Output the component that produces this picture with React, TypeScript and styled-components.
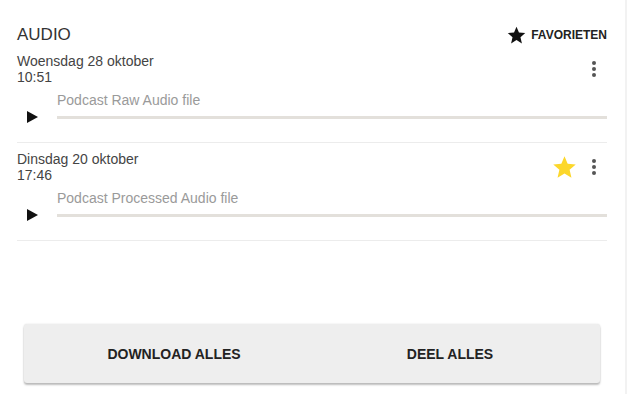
import React from 'react';
import styled, { createGlobalStyle } from 'styled-components';

const GlobalStyle = createGlobalStyle`
body {
  margin: 0;
  background: #ffffff;
  font-family: "Liberation Sans", Arial, sans-serif;
  color: #333333;
}
`;

type Recording = {
    date: string;
    time: string;
    title: string;
    favorite: boolean;
};

const recordings: Recording[] = [
    { date: 'Woensdag 28 oktober', time: '10:51', title: 'Podcast Raw Audio file', favorite: false },
    { date: 'Dinsdag 20 oktober', time: '17:46', title: 'Podcast Processed Audio file', favorite: true },
];

const StarIcon: React.FC<{ color: string; size: number }> = ({ color, size }) => (
    <svg width={size} height={size} viewBox="0 0 24 24">
        <path fill={color} d="M12 17.27L18.18 21l-1.64-7.03L22 9.24l-7.19-.61L12 2 9.19 8.63 2 9.24l5.46 4.73L5.82 21z" />
    </svg>
);

const MoreIcon = () => (
    <svg width="6" height="16" viewBox="0 0 6 16">
        <circle cx="3" cy="2" r="2" fill="#555" />
        <circle cx="3" cy="8" r="2" fill="#555" />
        <circle cx="3" cy="14" r="2" fill="#555" />
    </svg>
);

const PlayIcon = () => (
    <svg width="11" height="12" viewBox="0 0 11 12">
        <path d="M0 0 L11 6 L0 12 Z" fill="#111" />
    </svg>
);

const App: React.FC = () => {
    return (
        <Page>
            <GlobalStyle />
            <Header>
                <Title>AUDIO</Title>
                <FavLink>
                    <StarIcon color="#111" size={21} />
                    FAVORIETEN
                </FavLink>
            </Header>

            {recordings.map((r) => (
                <Item key={r.date}>
                    <ItemTop>
                        <DateBlock>
                            <div>{r.date}</div>
                            <div>{r.time}</div>
                        </DateBlock>
                        <Actions>
                            {r.favorite && <StarIcon color="#fcd72b" size={27} />}
                            <MoreButton><MoreIcon /></MoreButton>
                        </Actions>
                    </ItemTop>
                    <TrackRow>
                        <PlayButton><PlayIcon /></PlayButton>
                        <Track>
                            <TrackLabel>{r.title}</TrackLabel>
                            <Bar />
                        </Track>
                    </TrackRow>
                </Item>
            ))}

            <ButtonCard>
                <CardButton>DOWNLOAD ALLES</CardButton>
                <CardButton>DEEL ALLES</CardButton>
            </ButtonCard>
        </Page>
    );
};

const Page = styled.div`
height: 394px;
box-sizing: border-box;
padding: 25px 18px 0 17px;
border-right: 2px solid #f2f2f2;
width: 627px;
`;

const Header = styled.div`
display: flex;
justify-content: space-between;
align-items: center;
height: 20px;
`;

const Title = styled.div`
font-size: 17px;
color: #333;
`;

const FavLink = styled.div`
display: flex;
align-items: center;
gap: 4px;
font-size: 12px;
font-weight: bold;
color: #222;
`;

const Item = styled.div`
padding: 8px 0 23px;
border-bottom: 1px solid #ececec;
`;

const ItemTop = styled.div`
display: flex;
justify-content: space-between;
align-items: center;
`;

const DateBlock = styled.div`
font-size: 14px;
line-height: 16px;
color: #444;
`;

const Actions = styled.div`
display: flex;
align-items: center;
gap: 8px;
`;

const MoreButton = styled.div`
display: flex;
width: 16px;
justify-content: center;
margin-right: 5px;
`;

const TrackRow = styled.div`
display: flex;
align-items: flex-end;
margin-top: 7px;
`;

const PlayButton = styled.div`
width: 40px;
display: flex;
padding-left: 10px;
box-sizing: border-box;
margin-bottom: -4px;
`;

const Track = styled.div`
flex: 1;
`;

const TrackLabel = styled.div`
font-size: 14px;
line-height: 16px;
color: #9a9a9a;
margin-bottom: 8px;
`;

const Bar = styled.div`
height: 3px;
background: #e3e0db;
`;

const ButtonCard = styled.div`
display: flex;
margin: 83px 7px 0 7px;
padding: 0 12px;
height: 59px;
background: #eeeeee;
border-radius: 3px;
box-shadow: 0 2px 2px rgba(0, 0, 0, 0.25), 0 0 2px rgba(0, 0, 0, 0.12);
`;

const CardButton = styled.div`
flex: 1;
display: flex;
align-items: center;
justify-content: center;
font-size: 14px;
font-weight: bold;
color: #222;
`;

export default App;
